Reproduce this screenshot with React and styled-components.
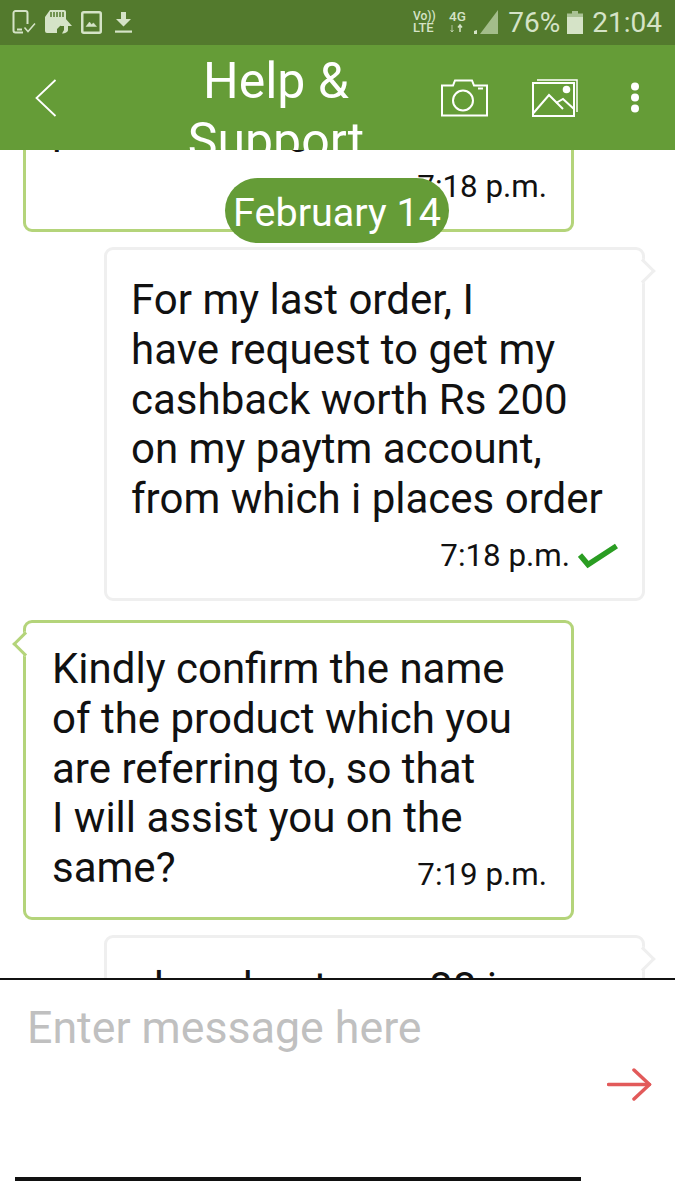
import styled, { createGlobalStyle } from "styled-components";

const GlobalStyle = createGlobalStyle`
  html, body {
    margin: 0;
    padding: 0;
    background: #fff;
  }
  * {
    box-sizing: border-box;
  }
`;

const Page = styled.div`
  width: 675px;
  height: 1200px;
  display: flex;
  flex-direction: column;
  overflow: hidden;
  background: #fff;
  color: #111;
  font-family: Roboto, "Liberation Sans", sans-serif;
`;

const StatusBar = styled.div`
  height: 45px;
  flex: none;
  display: flex;
  align-items: center;
  padding: 0 13px 1px 12px;
  background: #537a2d;
  color: #d5e3c7;
`;

const StatusLeft = styled.div`
  display: flex;
  align-items: center;
  gap: 9px;
`;

const StatusRight = styled.div`
  margin-left: auto;
  display: flex;
  align-items: center;
`;

const StatusText = styled.span`
  font-size: 28px;
  line-height: 45px;
  margin-left: ${(p) => p.$left || 0}px;
`;

const Header = styled.header`
  height: 105px;
  flex: none;
  display: flex;
  align-items: flex-start;
  overflow: hidden;
  background: #659c37;
  color: #fff;
`;

const BackButton = styled.div`
  width: 136px;
  flex: none;
  padding: 34px 0 0 35px;
  display: flex;
`;

const Title = styled.div`
  width: 280px;
  flex: none;
  padding-top: 6px;
  text-align: center;
  font-size: 50px;
  line-height: 60px;
`;

const HeaderActions = styled.div`
  display: flex;
  align-items: center;
  gap: 44px;
  padding: 33px 0 0 25px;
`;

const Chat = styled.main`
  flex: 1;
  min-height: 0;
  position: relative;
  overflow: hidden;
  display: flex;
  flex-direction: column;
  padding: 0 30px 0 23px;
`;

const DatePill = styled.div`
  position: absolute;
  top: 28px;
  left: 225px;
  z-index: 2;
  width: 224px;
  height: 65px;
  border-radius: 33px;
  background: #659c37;
  color: #fff;
  font-size: 39.5px;
  line-height: 69px;
  text-align: center;
  white-space: nowrap;
`;

const Bubble = styled.div`
  position: relative;
  flex: none;
  width: ${(p) => (p.$mine ? 541 : 551)}px;
  margin-top: ${(p) => p.$top}px;
  align-self: ${(p) => (p.$mine ? "flex-end" : "flex-start")};
  padding: ${(p) => (p.$mine ? "25px 24px 0 24px" : "21px 24px 0 26px")};
  height: ${(p) => p.$height}px;
  border: 3px solid ${(p) => (p.$mine ? "#efefef" : "#b4d47a")};
  border-radius: 9px;
  background: #fff;
  font-size: 42px;
  line-height: 49.8px;
  white-space: nowrap;

  &::after {
    content: ${(p) => (p.$tail ? '""' : "none")};
    position: absolute;
    top: 12px;
    width: 15px;
    height: 15px;
    background: #fff;
    transform: rotate(45deg);
    border: 3px solid ${(p) => (p.$mine ? "#efefef" : "#b4d47a")};
    ${(p) =>
      p.$mine
        ? "right: -10px; border-left: 0; border-bottom: 0;"
        : "left: -10px; border-right: 0; border-top: 0;"}
  }
`;

const Foot = styled.div`
  display: flex;
  align-items: flex-start;
  justify-content: ${(p) => (p.$split ? "space-between" : "flex-end")};
`;

const Stamp = styled.span`
  display: flex;
  align-items: center;
  gap: 8px;
  font-size: 31.3px;
  line-height: 50px;
  margin-top: ${(p) => p.$drop || 0}px;
`;

const Composer = styled.footer`
  height: 222px;
  flex: none;
  display: flex;
  flex-direction: column;
  border-top: 2px solid #111;
  background: #fff;
`;

const InputRow = styled.div`
  display: flex;
  align-items: flex-start;
  padding: 21px 23px 0 27px;
`;

const MessageInput = styled.input`
  flex: 1;
  min-width: 0;
  height: 54px;
  padding: 0;
  border: 0;
  outline: 0;
  background: transparent;
  font-family: inherit;
  font-size: 44.7px;
  color: #111;

  &::placeholder {
    color: #c0c0c0;
    opacity: 1;
  }
`;

const SendButton = styled.div`
  flex: none;
  display: flex;
  margin-top: 67px;
  color: #e25a5a;
`;

const Underline = styled.div`
  height: 4px;
  width: 566px;
  margin: auto 0 19px 15px;
  background: #111;
`;

const TabletCheck = () => (
  <svg width="24" height="24" viewBox="0 0 24 24" fill="none" stroke="currentColor" strokeWidth="2">
    <path d="M11 22.500H3.500a2 2 0 0 1-2-2V3a2 2 0 0 1 2-2h10a2 2 0 0 1 2 2v11" />
    <path d="M5 19.500h5" />
    <path d="M12.500 17.500l3.500 4 7-8" strokeWidth="1.500" />
  </svg>
);

const SdCard = () => (
  <svg width="27" height="24" viewBox="0 0 27 24" fill="currentColor">
    <path d="M5 0h14a2 2 0 0 1 2 2v8l-9 9v4H2a2 2 0 0 1-2-2V7z" />
    <path d="M6 2v5M9 2v5M12 2v5M15 2v5M18 2v5" stroke="#537a2d" strokeWidth="1.500" />
    <path d="M20 8l7 8h-4v4c0 2-3 3.500-6 3.500l2-3.500v-4h-4z" />
  </svg>
);

const PictureBox = () => (
  <svg width="21" height="23" viewBox="0 0 21 23" fill="none" stroke="currentColor">
    <rect x="1.250" y="1.250" width="18.500" height="20.500" rx="1.500" strokeWidth="2.500" />
    <path d="M5 15.500l3.500-4.500 2 2.500 2-1.500 3 3.500z" fill="currentColor" strokeWidth="0.500" />
  </svg>
);

const Download = () => (
  <svg width="17" height="21" viewBox="0 0 17 21" fill="currentColor" style={{ marginLeft: 4 }}>
    <path d="M6 0h5v7h5l-7.500 7.500L1 7h5z" />
    <rect x="0" y="18.500" width="17" height="2.200" />
  </svg>
);

const Network = () => (
  <svg width="54" height="24" viewBox="0 0 54 24" fill="currentColor">
    <text x="0" y="10" fontFamily="Roboto, sans-serif" fontSize="12" fontWeight="500">Vo))</text>
    <text x="0" y="22" fontFamily="Roboto, sans-serif" fontSize="13" fontWeight="500">LTE</text>
    <text x="36" y="11" fontFamily="Roboto, sans-serif" fontSize="13.500" fontWeight="500">4G</text>
    <path d="M39 15v7M37.500 20l1.500 2 1.500-2" stroke="currentColor" fill="none" strokeWidth="1" opacity="0.700" />
    <path d="M47 22v-7M45 17.500l2-2.500 2 2.500" stroke="currentColor" fill="none" strokeWidth="1.500" />
  </svg>
);

const Signal = () => (
  <svg width="24" height="24" viewBox="0 0 24 24" style={{ marginLeft: 7 }}>
    <path d="M24 0v24H6z" fill="#a3bd8a" />
    <path d="M0 24v-3l3-1v4z" fill="#d5e3c7" />
  </svg>
);

const Battery = () => (
  <svg width="16" height="23" viewBox="0 0 16 23" style={{ marginLeft: 7 }}>
    <path d="M5 0h6v2.500h5V23H0V2.500h5z" fill="#a9c294" />
    <rect x="0" y="6" width="16" height="17" fill="#d5e3c7" />
  </svg>
);

const BackIcon = () => (
  <svg width="22" height="38" viewBox="0 0 22 38" fill="none" stroke="currentColor" strokeWidth="1.800">
    <path d="M20.500 1L1.500 19l19 18" />
  </svg>
);

const CameraIcon = () => (
  <svg width="47" height="38" viewBox="0 0 47 38" fill="none" stroke="currentColor" strokeWidth="2">
    <path d="M1 36.500V6.500h11l2-5h17l2 5h13v30z" />
    <circle cx="22" cy="21.500" r="10" />
    <path d="M37 9.500h5" />
  </svg>
);

const GalleryIcon = () => (
  <svg width="47" height="39" viewBox="0 0 47 39" fill="none" stroke="currentColor" strokeWidth="2">
    <path d="M5 2h40v32" strokeWidth="1.500" />
    <rect x="1" y="5" width="41" height="33" />
    <path d="M1.500 35L17 17l14 14" />
    <path d="M24 25l7-4 11 10" />
    <circle cx="34.500" cy="11.500" r="2.800" fill="currentColor" />
  </svg>
);

const DotsIcon = () => (
  <svg width="14" height="31" viewBox="0 0 14 31" fill="currentColor" style={{ marginLeft: 5 }}>
    <circle cx="7" cy="4.500" r="4" />
    <circle cx="7" cy="15.500" r="4" />
    <circle cx="7" cy="26.500" r="4" />
  </svg>
);

const CheckIcon = () => (
  <svg width="40" height="26" viewBox="0 0 40 26" fill="none" stroke="#2a9d22" strokeWidth="5.500">
    <path d="M2 12l8 9.500L38.500 3" />
  </svg>
);

const SendIcon = () => (
  <svg width="45" height="33" viewBox="0 0 45 33" fill="none" stroke="currentColor" strokeWidth="3.500" strokeLinecap="round" strokeLinejoin="round">
    <path d="M1.500 16.500h41" />
    <path d="M27 2l15.500 14.500L27 31" />
  </svg>
);

export default function App() {
  return (
    <Page>
      <GlobalStyle />
      <StatusBar>
        <StatusLeft>
          <TabletCheck />
          <SdCard />
          <PictureBox />
          <Download />
        </StatusLeft>
        <StatusRight>
          <Network />
          <Signal />
          <StatusText $left={10}>76%</StatusText>
          <Battery />
          <StatusText $left={9}>21:04</StatusText>
        </StatusRight>
      </StatusBar>
      <Header>
        <BackButton>
          <BackIcon />
        </BackButton>
        <Title>Help & Support</Title>
        <HeaderActions>
          <CameraIcon />
          <GalleryIcon />
          <DotsIcon />
        </HeaderActions>
      </Header>
      <Chat>
        <DatePill>February 14</DatePill>
        <Bubble $top={-70} $height={152}>
          please send gift
          <Foot>
            <Stamp $drop={8}>7:18 p.m.</Stamp>
          </Foot>
        </Bubble>
        <Bubble $mine $tail $top={15} $height={354}>
          For my last order, I
          <br />
          have request to get my
          <br />
          cashback worth Rs 200
          <br />
          on my paytm account,
          <br />
          from which i places order
          <Foot>
            <Stamp $drop={7}>
              7:18 p.m.
              <CheckIcon />
            </Stamp>
          </Foot>
        </Bubble>
        <Bubble $tail $top={19} $height={300}>
          Kindly confirm the name
          <br />
          of the product which you
          <br />
          are referring to, so that
          <br />I will assist you on the
          <Foot $split>
            same?
            <Stamp $drop={7}>7:19 p.m.</Stamp>
          </Foot>
        </Bubble>
        <Bubble $mine $tail $top={15} $height={200}>
          also about your 88 i
        </Bubble>
      </Chat>
      <Composer>
        <InputRow>
          <MessageInput placeholder="Enter message here" />
          <SendButton>
            <SendIcon />
          </SendButton>
        </InputRow>
        <Underline />
      </Composer>
    </Page>
  );
}
